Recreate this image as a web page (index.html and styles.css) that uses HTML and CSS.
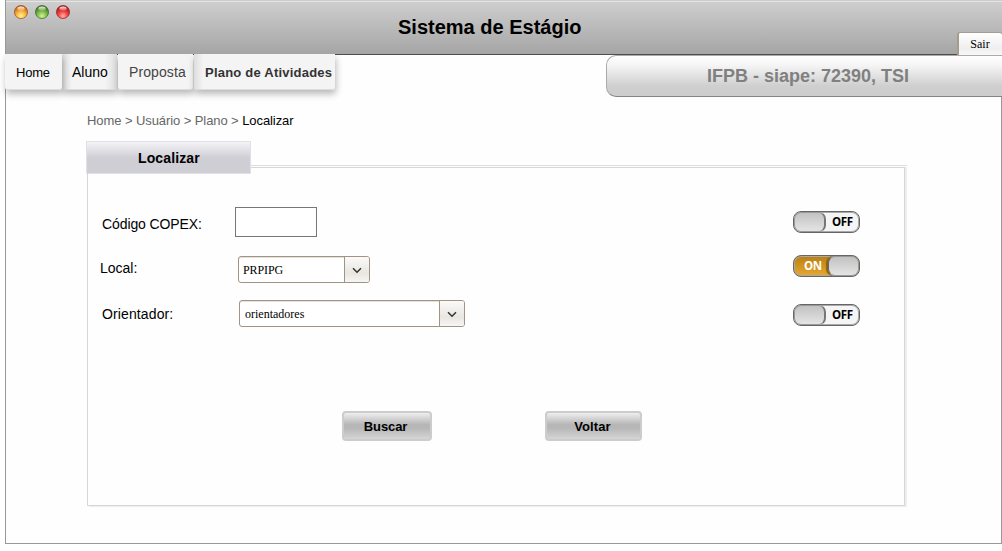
FILE: index.html
```html
<!DOCTYPE html>
<html lang="pt-BR">
<head>
<meta charset="utf-8">
<title>Sistema de Estágio</title>
<link rel="stylesheet" href="styles.css">
</head>
<body>
<div class="window">
  <header class="titlebar">
    <svg class="lights" width="60" height="18" viewBox="0 0 60 18">
      <defs>
        <radialGradient id="orange" cx=".5" cy=".8" r=".8"><stop offset="0" stop-color="#fff394"/><stop offset=".45" stop-color="#f9b43c"/><stop offset="1" stop-color="#b9440b"/></radialGradient>
        <radialGradient id="green" cx=".5" cy=".8" r=".8"><stop offset="0" stop-color="#d2f59a"/><stop offset=".45" stop-color="#7dba48"/><stop offset="1" stop-color="#285f17"/></radialGradient>
        <radialGradient id="red" cx=".5" cy=".8" r=".8"><stop offset="0" stop-color="#ffb1a8"/><stop offset=".45" stop-color="#f2403e"/><stop offset="1" stop-color="#94090c"/></radialGradient>
        <linearGradient id="shine" x2="0" y2="1"><stop offset="0" stop-color="#fff" stop-opacity=".9"/><stop offset="1" stop-color="#fff" stop-opacity=".15"/></linearGradient>
      </defs>
      <g stroke-width=".7">
        <circle cx="8" cy="9" r="6.6" fill="url(#orange)" stroke="#985022"/>
        <circle cx="29" cy="9" r="6.6" fill="url(#green)" stroke="#416d30"/>
        <circle cx="50" cy="9" r="6.6" fill="url(#red)" stroke="#8d3030"/>
      </g>
      <g fill="url(#shine)">
        <ellipse cx="8" cy="5.6" rx="3.7" ry="2.1"/>
        <ellipse cx="29" cy="5.6" rx="3.7" ry="2.1"/>
        <ellipse cx="50" cy="5.6" rx="3.7" ry="2.1"/>
      </g>
    </svg>
    <h1 class="title">Sistema de Estágio</h1>
    <button class="logout">Sair</button>
  </header>
  <div class="toolbar">
    <nav class="menu">
      <a class="item home">Home</a>
      <a class="item aluno">Aluno</a>
      <a class="item proposta">Proposta</a>
      <a class="item plano">Plano de Atividades</a>
    </nav>
    <div class="user"><span>IFPB - siape: 72390, TSI</span></div>
  </div>
  <main class="content">
    <div class="crumbs">Home &gt; Usuário &gt; Plano &gt; <b class="current">Localizar</b></div>
    <div class="tabrow"><h2 class="tab"><span>Localizar</span></h2><div class="rule"></div></div>
    <section class="panel">
      <div class="row code">
        <label class="label">Código COPEX:</label>
        <input class="input" type="text">
        <div class="toggle off"><i class="knob"></i><span>OFF</span></div>
      </div>
      <div class="row local">
        <label class="label">Local:</label>
        <div class="select"><span class="value">PRPIPG</span><span class="arrow"><svg width="10" height="7" viewBox="0 0 10 7"><path d="M1 1.2 5 5.2 9 1.2" fill="none" stroke="#333" stroke-width="1.5"/></svg></span></div>
        <div class="toggle on"><span>ON</span><i class="knob"></i></div>
      </div>
      <div class="row advisor">
        <label class="label">Orientador:</label>
        <div class="select"><span class="value">orientadores</span><span class="arrow"><svg width="10" height="7" viewBox="0 0 10 7"><path d="M1 1.2 5 5.2 9 1.2" fill="none" stroke="#333" stroke-width="1.5"/></svg></span></div>
        <div class="toggle off"><i class="knob"></i><span>OFF</span></div>
      </div>
      <div class="actions">
        <button class="button search">Buscar</button>
        <button class="button back">Voltar</button>
      </div>
    </section>
  </main>
</div>
</body>
</html>
```
FILE: styles.css
```css
* { box-sizing: border-box; }
body { margin: 0; background: #fff; overflow: hidden; font-family: "Liberation Sans", Arial, sans-serif; color: #000; }
h1, h2 { margin: 0; }
button { padding: 0; }
span, label { white-space: nowrap; }
.window { margin-left: 5px; width: 997px; height: 544px; border: 1px solid #999; border-top: 0; background: #fefefe; }
.titlebar { display: grid; grid-template-columns: 391px 1fr 45px; height: 55px; margin-right: -1px; border-bottom: 1px solid #4e4e4e; background: linear-gradient(#ccc 0 1px, #e6e6e6 1px 2px, #cecece 2px, #a5a5a5); }
.lights { margin: 3px 0 0 7px; }
.title { padding: 16px 0 0 1px; font-size: 20px; line-height: 23px; white-space: nowrap; }
.logout { align-self: end; height: 23px; margin-bottom: -1px; padding-right: 1px; border: 1px solid #a59b8e; border-width: 1px 0 0 2px; border-radius: 3px 3px 0 0; background: linear-gradient(#fff, #eee 70%, #f8f8f8); font: 12px "Liberation Serif", "Times New Roman", serif; color: #000; }
.toolbar { display: flex; justify-content: space-between; height: 42px; margin: 0 -1px; }
.menu { display: flex; height: 35px; margin-top: -1px; }
.item { height: 36px; padding-top: 10px; line-height: 17px; white-space: nowrap; background: #f4f4f4; border-radius: 0 0 3px 3px; box-shadow: 1px 4px 7px rgba(0,0,0,.28), inset 0 -1px 0 #ddd; clip-path: inset(0 -10px -12px -10px); }
.home { position: relative; z-index: 1; width: 57px; padding-left: 11px; font-size: 13px; letter-spacing: -.2px; }
.aluno { width: 55px; padding-left: 10px; font-size: 14px; background: linear-gradient(90deg, #ddd, #f4f4f4 10px 43px, #ddd); }
.proposta { width: 75px; margin-left: 1px; padding-left: 11px; font-size: 14px; letter-spacing: .1px; color: #444; }
.plano { width: 141px; margin-left: 1px; padding-left: 11px; font-size: 13px; font-weight: bold; letter-spacing: .22px; color: #333; background: linear-gradient(90deg, #ddd, #f4f4f4 9px); }
.user { width: 396px; height: 42px; padding: 9px 0 0 100px; border: 1px solid #aaa; border-bottom-color: #858585; border-right: 0; border-radius: 10px 0 0 10px; background: linear-gradient(#fff, #f4f4f4 25%, #cfcfcf 75%, #cdcdcd); color: #808080; font-size: 18px; line-height: 22px; font-weight: bold; }
.content { padding: 15px 94px 0 81px; }
.crumbs { height: 29px; font-size: 13px; line-height: 17px; letter-spacing: -.08px; color: #666; white-space: nowrap; }
.current { font-weight: normal; color: #000; }
.tabrow { display: flex; position: relative; z-index: 1; height: 33px; margin: 0 0 -7px -1px; }
.tab { width: 165px; height: 33px; padding: 8px 0 0 51px; border: 1px solid #e0e0e6; background: linear-gradient(#f4f4f7, #d0cfd6 50%, #cfced5); font-size: 14px; line-height: 17px; letter-spacing: .12px; }
.rule { flex: 1; height: 1px; margin: 24px 0 0; background: #ddd; }
.panel { width: 818px; height: 339px; padding: 39px 0 0 14px; border: 1px solid #d6d6d6; box-shadow: 2px 0 0 #eee, 2px 1px 0 #eee; }
.row { display: grid; grid-template-columns: 133px 558px 67px; align-items: start; }
.label { font-size: 14px; line-height: 16px; }
.input { width: 82px; height: 30px; border: 1px solid #777; background: #fff; }
.code { height: 49px; }
.code .label { margin-top: 9px; letter-spacing: -.1px; }
.code .toggle { margin-top: 4px; }
.local { height: 44px; }
.local .label { margin: 4px 0 0 -2px; }
.local .select { width: 132px; margin-left: 3px; }
.local .value { padding-left: 4px; letter-spacing: -.1px; }
.local .toggle { margin-top: -1px; }
.advisor { height: 111px; }
.advisor .label { margin-top: 6px; letter-spacing: .12px; }
.advisor .select { width: 226px; margin-left: 4px; }
.advisor .toggle { margin-top: 4px; }
.select { display: flex; height: 27px; border: 1px solid #a09483; border-radius: 3px; background: #fff; font: 12px/25px "Liberation Serif", "Times New Roman", serif; box-shadow: inset 0 1px 0 #e5e2dd; }
.value { flex: 1; padding: 1px 0 0 5px; }
.arrow { display: flex; align-items: center; justify-content: center; width: 25px; padding-top: 1px; border-left: 1px solid #a09483; border-radius: 0 2px 2px 0; background: linear-gradient(#fbfafa, #e9e6e0 65%, #f7f6f4); }
.toggle { display: flex; width: 67px; height: 22px; border: 1px solid #666; border-radius: 8px; overflow: hidden; font: bold 11.5px/20px "Open Sans", "Noto Sans", sans-serif; letter-spacing: -.3px; box-shadow: inset 0 0 0 1px #aaa; }
.knob { width: 32px; height: 20px; border: 1px solid #999; border-radius: 7px; background: linear-gradient(#c2c2c2, #e4e4e4); }
.off { background: #f5f5f5; }
.off .knob { border-right: 2px solid #777; }
.off span { padding-left: 6px; }
.on { justify-content: space-between; background: linear-gradient(#bb7f12, #e7a82e); color: #fff; }
.on span { padding-left: 10px; }
.on .knob { width: 31px; border-left-color: #666; box-shadow: -2px 0 1px #8c6115; }
.actions { display: flex; gap: 113px; padding-left: 240px; }
.button { height: 30px; border: 2px solid #ccc; border-radius: 4px; background: linear-gradient(#eee, #b6b6b6 45%, #b8b8b8 60%, #d5d5d5); font: bold 13px "Liberation Sans", Arial, sans-serif; color: #000; }
.search { width: 90px; padding-right: 3px; letter-spacing: -.1px; }
.back { width: 97px; padding-right: 2px; letter-spacing: .1px; }
```
